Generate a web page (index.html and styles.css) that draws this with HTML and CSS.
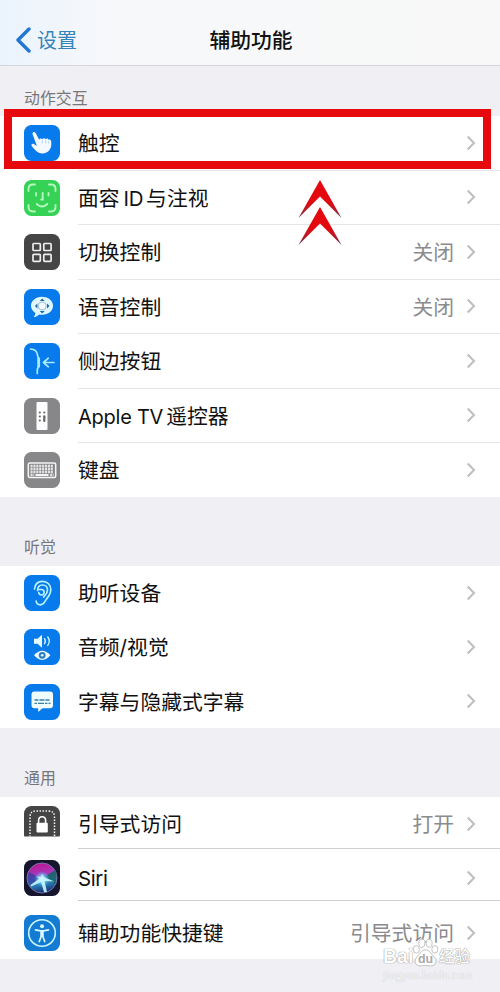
FILE: index.html
```html
<!DOCTYPE html>
<html lang="zh-CN">
<head>
<meta charset="utf-8">
<title>辅助功能</title>
<link rel="stylesheet" href="styles.css">
</head>
<body>
<svg class="defs" width="0" height="0"><defs>
<symbol id="chev" viewBox="0 0 10 16"><path d="M1.7 1.5 8 8 1.7 14.5" fill="none" stroke="currentColor" stroke-width="2.1"/></symbol>
</defs></svg>
<header class="nav">
  <a class="back"><svg width="17" height="26" viewBox="0 0 17 26"><path d="M14 2 3 13l11 11" fill="none" stroke="#2377d2" stroke-width="3.4" stroke-linecap="round" stroke-linejoin="round"/></svg><span>设置</span></a>
  <h1>辅助功能</h1>
</header>
<main>
<section>
  <h2 class="first">动作交互</h2>
  <ul class="list motion">
    <li><svg class="icon blue" viewBox="0 0 36 36"><path d="M9.200 7.200c1.200-.8 2.200.1 2.700 1.300l3.300 6.200c.5-1.500 2.200-1.600 3-.5.8-1.300 2.600-1.300 3.300 0 .8-1 2.500-.9 3 .5 1.300-.6 2.500.2 2.600 1.500.5 3.800.3 6.100-1.600 8.800-2.200 3.100-7 4.400-10.700 2.700-2.400-1.200-4.200-3.400-6.800-6.300-1.500-1.700.2-3.200 1.900-2.300l3 1.800L8.700 9.500c-.4-.9-.3-1.800.5-2.300z" fill="#f3faff"/><path d="M18.400 15v3.200M21.700 15.200v3.200M24.700 16v2.700" stroke="#91c9ff" stroke-width=".7"/></svg><div class="cell"><span>触控</span><svg class="chev"><use href="#chev"/></svg></div></li>
    <li><svg class="icon green" viewBox="0 0 36 36"><g fill="none" stroke="#b4f8bd" stroke-width="1.900" stroke-linecap="round"><path d="M4.500 11V9q0-4.500 4.500-4.500h2M25 4.500h2q4.500 0 4.500 4.500v2M31.500 25v2q0 4.500-4.500 4.500h-2M11 31.500H9q-4.500 0-4.500-4.500v-2M12 13v2.500M24.500 13v2.500M18.700 13v6.500h-1.500M12.700 24q5.300 5 10.600 0"/></g></svg><div class="cell"><span>面容<b class="latin id">ID</b>与注视</span><svg class="chev"><use href="#chev"/></svg></div></li>
    <li><svg class="icon dark" viewBox="0 0 36 36"><g fill="none" stroke="#eee" stroke-width="1.700"><rect x="9" y="9.500" width="7.300" height="7" rx=".8"/><rect x="19.800" y="9.500" width="7.300" height="7" rx=".8"/><rect x="9" y="20.300" width="7.300" height="7" rx=".8"/><rect x="19.800" y="20.300" width="7.300" height="7" rx=".8"/></g></svg><div class="cell"><span>切换控制</span><em>关闭</em><svg class="chev"><use href="#chev"/></svg></div></li>
    <li><svg class="icon blue" viewBox="0 0 36 36"><path d="M18 7.700c6.500 0 11 4 11 9.100 0 5.200-4.700 9-10.700 9-1.200 0-2.300-.1-3.200-.4-1.400 1.600-3.300 2.500-5.400 2.600 1-1.100 1.700-2.500 1.700-4C8.600 22.300 7 19.800 7 16.800c0-5.100 4.700-9.100 11-9.100z" fill="#dff8ff"/><circle cx="18.200" cy="17" r="4" fill="#f4fcff" stroke="#8db9da" stroke-width=".9"/><path d="m18.200 9.500 2.500 2.400h-5zM18.200 24.500l2.500-2.400h-5zM10.900 17l2.500-2.500v5zM25.500 17l-2.500-2.500v5z" fill="#2d6798"/></svg><div class="cell"><span>语音控制</span><em>关闭</em><svg class="chev"><use href="#chev"/></svg></div></li>
    <li><svg class="icon blue" viewBox="0 0 36 36"><g fill="none" stroke="#a9eaff" stroke-width="1.700" stroke-linecap="round" stroke-linejoin="round"><path d="M6.500 6c4.500.2 6.500 2 7 6 .1 1.500.8 1.800.8 3.500v8c0 1.500-1 2-1 3.500v3.500"/><path d="M14.800 15.500v8" stroke-width="2.500"/><path d="M30 19.500H19.500M24.300 15.200l-4.800 4.300 4.800 4.300"/></g></svg><div class="cell"><span>侧边按钮</span><svg class="chev"><use href="#chev"/></svg></div></li>
    <li><svg class="icon gray" viewBox="0 0 36 36"><rect x="12.500" y="4" width="11" height="28" rx="1" fill="#fff"/><g fill="#666"><circle cx="15.800" cy="14.500" r="1.100"/><circle cx="20.300" cy="14.500" r="1.100"/><circle cx="15.800" cy="18.500" r="1.100"/><circle cx="15.800" cy="22.500" r="1.100"/><rect x="19.200" y="17.200" width="2.200" height="6.700" rx="1"/></g></svg><div class="cell"><span><b class="latin tv">Apple TV</b>遥控器</span><svg class="chev"><use href="#chev"/></svg></div></li>
    <li><svg class="icon gray" viewBox="0 0 36 36"><rect x="4.300" y="11" width="27.400" height="14.500" rx="1.500" fill="none" stroke="#f5f5f5" stroke-width="1.500"/><g stroke="#e4e4e6" stroke-width="2.300" stroke-dasharray="2.100 .8"><path d="M6.500 14h23.200M6.500 17h23.200M6.500 20h23.200M6.500 23h3.700M26.200 23h3.500"/></g><path d="M11.500 23h13" stroke="#f3f3f3" stroke-width="2"/></svg><div class="cell"><span>键盘</span><svg class="chev"><use href="#chev"/></svg></div></li>
  </ul>
  <div class="mark" aria-hidden="true"></div>
  <svg class="arrows" width="44" height="68" viewBox="0 0 44 68"><defs><linearGradient id="tip" x1="0" y1="0" x2="0" y2="1"><stop offset=".55" stop-color="#e3090f"/><stop offset=".78" stop-color="#b51c28"/><stop offset="1" stop-color="#563344"/></linearGradient></defs><path d="M22 1 43.500 39 22 17.500.5 39z" fill="url(#tip)"/><path d="M22 28 43.500 66 22 44.500.5 66z" fill="url(#tip)"/></svg>
</section>
<section>
  <h2>听觉</h2>
  <ul class="list hearing">
    <li><svg class="icon blue" viewBox="0 0 36 36"><g fill="none" stroke="#b6f2ff" stroke-width="1.700" stroke-linecap="round"><path d="M10.500 14C11 9 14 6.400 18.500 6.400c5 0 8.300 3.600 8.300 8.200 0 4.500-2 6.800-4.400 9.600-1.500 2-2.400 5.600-6 5.600-2.300 0-4-1.500-4.300-3.800"/><path d="M13.600 15.500c0-3.300 1.900-5.500 4.900-5.500s5 2.100 5 5c0 3.500-2.200 5-3.800 7"/><path d="M14.200 14.500h3.300c3.500 0 3.500 5.300 0 5.500-1.600 0-2.500-.8-2.700-2.300"/></g></svg><div class="cell"><span>助听设备</span><svg class="chev"><use href="#chev"/></svg></div></li>
    <li><svg class="icon blue" viewBox="0 0 36 36"><path d="M10 9.800h3.500L18 5.700v13l-4.500-4H10z" fill="#e6fbff"/><g fill="none" stroke="#c8f1ff" stroke-width="1.400" stroke-linecap="round"><path d="M20.500 9.700q1.700 2.500 0 5M23.800 8q3 4.200 0 8.400"/></g><path d="M10 26.300q8.200-9.200 16.400 0-8.200 9.200-16.400 0z" fill="#effcff"/><circle cx="18.200" cy="26.300" r="3.400" fill="#287fc5"/><circle cx="18.200" cy="26.300" r="1.300" fill="#e6fbff"/></svg><div class="cell"><span>音频/视觉</span><svg class="chev"><use href="#chev"/></svg></div></li>
    <li><svg class="icon blue" viewBox="0 0 36 36"><path d="M10.500 7.500h15.500q3 0 3 3v10.700q0 3-3 3h-7.500L14.200 28v-3.800h-3.700q-3 0-3-3V10.500q0-3 3-3z" fill="#effdff"/><g stroke="#397fa8" stroke-width="1.300"><path d="M10.500 16h16" stroke-dasharray="4 1 5 1"/><path d="M10.500 19.300h16" stroke-dasharray="2.500 1 6 1"/></g></svg><div class="cell"><span>字幕与隐藏式字幕</span><svg class="chev"><use href="#chev"/></svg></div></li>
  </ul>
</section>
<section>
  <h2>通用</h2>
  <ul class="list general">
    <li><svg class="icon dark clipped" viewBox="0 0 36 36"><path d="M6 31V11q0-6 6-6h12.500q6 0 6 6v20" fill="none" stroke="#f5f5f5" stroke-width="1.500" stroke-dasharray="1.500 1.500"/><rect x="12.500" y="16.700" width="11.300" height="9.800" rx="1" fill="#fff"/><path d="M14.600 17v-2.500q0-3.800 3.500-3.800t3.500 3.800V17" fill="none" stroke="#fff" stroke-width="1.600"/></svg><div class="cell"><span>引导式访问</span><em>打开</em><svg class="chev"><use href="#chev"/></svg></div></li>
    <li><svg class="icon siri" viewBox="0 0 36 36"><defs><linearGradient id="orb" x1=".4" y1="0" x2=".6" y2="1"><stop stop-color="#bd1790"/><stop offset=".4" stop-color="#a53abe"/><stop offset=".62" stop-color="#3297c9"/><stop offset="1" stop-color="#16266b"/></linearGradient><radialGradient id="glow"><stop stop-color="#fff"/><stop offset=".4" stop-color="#8feaff" stop-opacity=".75"/><stop offset="1" stop-color="#39a8ff" stop-opacity="0"/></radialGradient></defs><circle cx="18" cy="18" r="15" fill="url(#orb)" stroke="#7771ab" stroke-width="1"/><path d="M20 17 31.500 10q2 7-.5 14z" fill="#13665f" opacity=".85"/><path d="M16 18 5 12q-3 8 1 14z" fill="#3144a0" opacity=".8"/><circle cx="18" cy="19" r="8" fill="url(#glow)"/><path d="m18 13.500 1.500 3.500 11 4.500-10-.5 2.500 11h-3l-3-10L7 26.500l-.5-1.500 9-6.500-4-2 5.500.5z" fill="#c8f6ff" opacity=".9"/></svg><div class="cell"><span><b class="latin">Siri</b></span><svg class="chev"><use href="#chev"/></svg></div></li>
    <li><svg class="icon access" viewBox="0 0 36 36"><circle cx="18" cy="18" r="13.300" fill="none" stroke="#c8f4ff" stroke-width="1.600"/><circle cx="18" cy="11.300" r="2" fill="#d9f8ff"/><path d="m11.500 14.800 5 1h3l5-1M17.300 16v5l-2 5.500M18.700 16v5l2 5.500" fill="none" stroke="#d9f8ff" stroke-width="1.700" stroke-linecap="round"/><path d="M16.500 15.500h3v6h-3z" fill="#d9f8ff"/></svg><div class="cell"><span>辅助功能快捷键</span><em>引导式访问</em><svg class="chev"><use href="#chev"/></svg></div></li>
  </ul>
</section>
</main>
<div class="watermark">
  <div class="brand"><span>Bai</span><svg width="27" height="30" viewBox="0 0 25 29"><g fill="#fff" stroke="#b5b5b5" stroke-width=".8"><ellipse cx="3.700" cy="11" rx="2.900" ry="3.700"/><ellipse cx="9" cy="5" rx="2.900" ry="3.900"/><ellipse cx="16" cy="5" rx="2.900" ry="3.900"/><ellipse cx="21.500" cy="11" rx="2.900" ry="3.700"/><path d="M12.500 11.500c4 0 5 3.500 7.700 6 5 4.500 2 10-3 9.500-3-.5-6-.5-9 0-5.500.6-8-5-3.300-9.500 2.700-2.500 3.500-6 7.600-6z"/></g><text x="12.500" y="24.500" text-anchor="middle">du</text></svg><span class="cn">经验</span></div>
  <div class="url">jingyan.baidu.com</div>
</div>
</body>
</html>
```
FILE: styles.css
```css
* { box-sizing: border-box; }
body {
  position: relative;
  margin: 0;
  height: 992px;
  overflow: hidden;
  background: #efeff4;
  color: #111;
  font-family: Inter, "Noto Sans CJK SC", sans-serif;
  font-size: 20.8px;
}
.defs { position: absolute; }
.nav {
  display: grid;
  grid-template-columns: 1fr auto 1fr;
  align-items: center;
  height: 66px;
  padding: 14px 0 0 15px;
  border-bottom: 1px solid #d6d6da;
  background: linear-gradient(90deg, #eaf3fd 0, #f7f8fa 22%, #f8f8f8 100%);
}
.back { display: flex; align-items: center; gap: 5px; color: #3584b9; font-size: 20px; line-height: 28px; }
.back span { padding-top: 2px; }
h1 { margin: 0; padding: 2px 13px 0 0; color: #111; font-size: 20.8px; line-height: 28px; font-weight: 500; }
section { position: relative; }
h2 {
  display: flex;
  align-items: flex-end;
  height: 69px;
  margin: 0;
  padding: 0 24px 6px;
  color: #77777b;
  font-size: 15.9px;
  line-height: 24px;
  font-weight: 400;
}
h2.first { height: 50px; padding-bottom: 5px; }
.list { margin: 0; padding: 0; list-style: none; background: #fff; }
.list li { display: flex; align-items: center; gap: 18px; height: 54.5px; padding-left: 24px; }
.motion { height: 381px; }
.hearing, .general { height: 162px; }
.hearing li { height: 54.3px; }
.general li:nth-child(1) { height: 52px; padding-top: 2px; }
.general li:nth-child(2) { height: 52px; padding-top: 6px; }
.general li:nth-child(3) { height: 58px; padding-top: 6px; }
.icon { flex: none; width: 36px; height: 36px; border-radius: 7.500px; }
.blue { background: #087bec; }
.green { background: #35d256; }
.dark { background: #454545; }
.gray { background: #87878a; }
.siri { background: #15152d; }
.access { background: #137bd2; }
.cell {
  display: flex;
  flex: 1;
  align-items: center;
  height: 100%;
  padding-right: 24px;
  border-bottom: 1px solid #e4e4e6;
  line-height: 30px;
}
.cell > span { flex: 1; padding-top: 3px; white-space: nowrap; }
.hearing .cell, .list li:last-child .cell { border-bottom-color: transparent; }
.general .cell { border-bottom-color: #cfcfd1; }
.cell em { margin-right: 12px; padding-top: 3px; color: #8b8b8e; font-style: normal; }
.chev { width: 10px; height: 16px; color: #bfbfc3; }
.latin { font-size: 20.400px; font-weight: 400; letter-spacing: -.35px; }
.latin.id { margin: 0 3px 0 4px; }
.latin.tv { margin-right: 3px; font-size: 20px; letter-spacing: -.25px; }
.clipped { clip-path: inset(0 0 5.500px 0); }
.mark {
  position: absolute;
  left: 3.500px;
  top: 43px;
  width: 487px;
  height: 60px;
  border: 8px solid #e60a0e;
}
.arrows { position: absolute; left: 298px; top: 113px; }
.watermark { position: absolute; left: 383px; top: 938px; width: 100px; color: #fff; }
.brand {
  display: flex;
  align-items: flex-end;
  height: 30px;
  font: 600 19.500px/23px "Liberation Sans", sans-serif;
  text-shadow: 0 0 1px #888, 0 0 1px #999;
}
.brand svg { flex: none; margin-left: -1px; overflow: visible; }
.brand text { fill: #aaa; font: 600 12px "Liberation Sans", sans-serif; text-shadow: none; }
.brand .cn { font: 500 15.500px/25px "Noto Sans CJK SC", sans-serif; white-space: nowrap; }
.url { color: #f6f6f8; font: 12px/14px "Liberation Serif", serif; text-shadow: 0 0 1px #bbb; }
```
